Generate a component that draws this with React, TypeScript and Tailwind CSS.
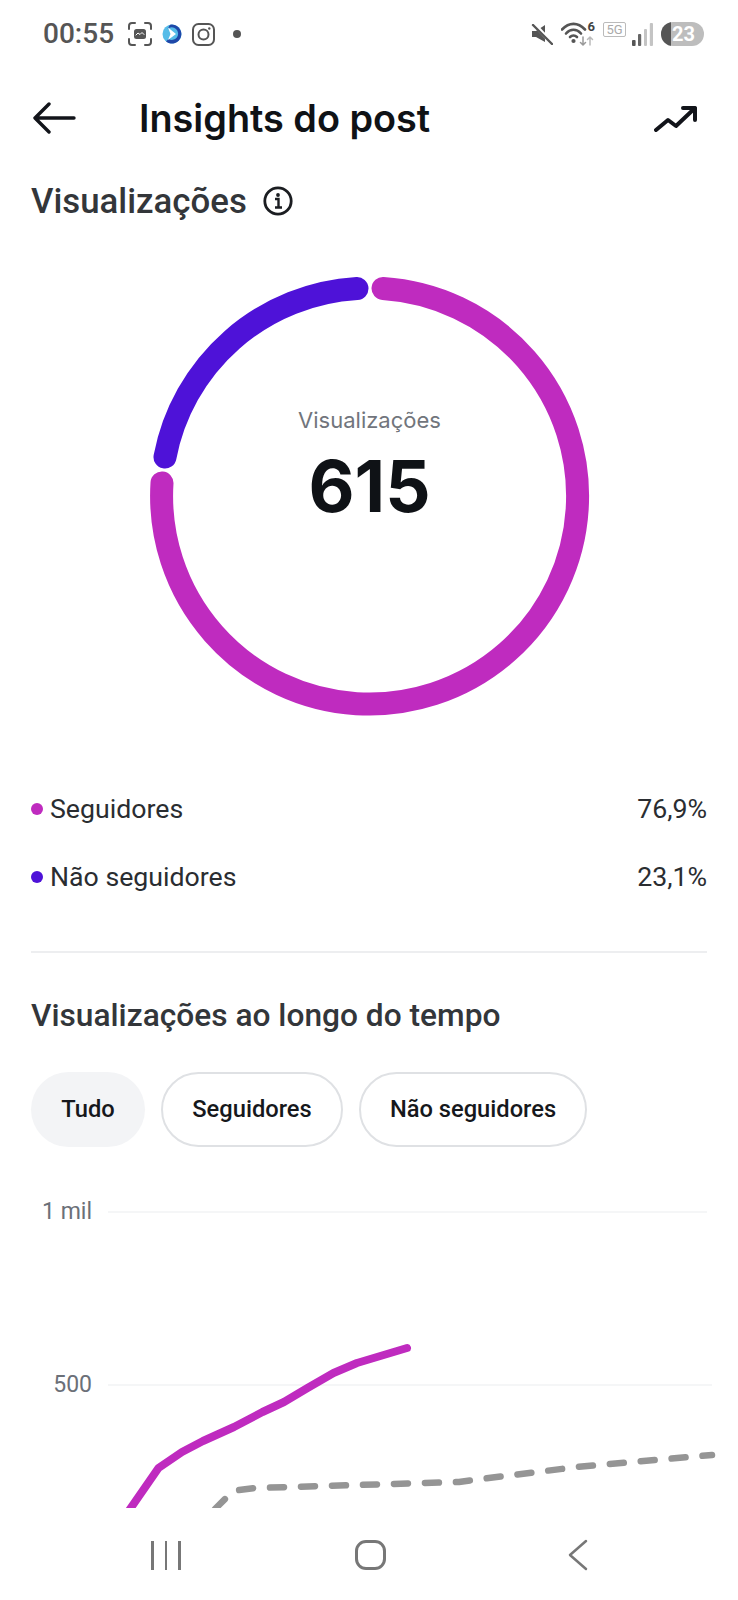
import React from 'react';

const MAGENTA = '#BF2BBF';
const INDIGO = '#4E12D8';

function Donut() {
    return (
        <svg width="440" height="440" viewBox="150 276 440 440" className="block">
            <path d="M383 288.5 A208 208 0 1 1 162 483" fill="none" stroke={MAGENTA} strokeWidth="23" strokeLinecap="round" />
            <path d="M165 457 A208 208 0 0 1 357 288.5" fill="none" stroke={INDIGO} strokeWidth="23" strokeLinecap="round" />
        </svg>
    );
}

function StatusBar() {
    return (
        <div className="h-[68px] flex items-center pl-[43px] pr-[34px] text-[#555]">
            <span className="font-['Roboto'] font-medium text-[28px] leading-none w-[85px]">00:55</span>
            <svg width="24" height="24" viewBox="0 0 24 24" fill="none" stroke="#555" strokeWidth="2" strokeLinecap="round">
                <path d="M1 7V4a3 3 0 0 1 3-3h3M17 1h3a3 3 0 0 1 3 3v3M23 17v3a3 3 0 0 1-3 3h-3M7 23H4a3 3 0 0 1-3-3v-3" />
                <rect x="6" y="7" width="12" height="10" rx="2.5" fill="#555" stroke="none" />
                <path d="M8 13l2-2 2 1.5 2-2 2 2" stroke="#fff" strokeWidth="1" />
            </svg>
            <svg width="20" height="20" viewBox="0 0 20 20" className="ml-[10px]">
                <circle cx="10" cy="10" r="9.5" fill="#56BCE8" />
                <path d="M8 .7A9.5 9.5 0 1 1 4 17.5l2.5-2.5a6.3 6.3 0 1 0-1-10Z" fill="#1F47A8" />
                <path d="M6 3.5l8 6.5-8 6 2.5-6Z" fill="#fff" />
            </svg>
            <svg width="23" height="23" viewBox="0 0 23 23" fill="none" stroke="#555" strokeWidth="2" className="ml-[10px]">
                <rect x="1" y="1" width="21" height="21" rx="5.5" />
                <circle cx="11.5" cy="11.5" r="5" />
                <circle cx="17.3" cy="5.5" r="1.2" fill="#555" stroke="none" />
            </svg>
            <div className="w-2 h-2 rounded-full bg-[#555] ml-[18px]" />
            <div className="flex-1" />
            <svg width="22" height="21" viewBox="0 0 22 21" className="mr-[8px]">
                <path d="M1 7h4l9-6v17l-9-5H1Z" fill="#555" />
                <path d="M3 0l18 19" stroke="#fff" strokeWidth="4" />
                <path d="M2 1l19 19" stroke="#555" strokeWidth="2.4" strokeLinecap="round" />
            </svg>
            <div className="relative w-[34px] h-[24px] mr-[8px]">
                <svg width="34" height="24" viewBox="0 0 34 24" fill="none" strokeLinecap="round" className="absolute left-0 top-0">
                    <path d="M1 7.5C8 0 17 0 24 7.5" stroke="#555" strokeWidth="2.6" />
                    <path d="M5 11.5C9.5 6.5 15.5 6.5 20 11.5" stroke="#555" strokeWidth="2.6" />
                    <path d="M9 15C11 13 14 13 16 15" stroke="#555" strokeWidth="2.6" />
                    <circle cx="12.5" cy="19" r="2.1" fill="#555" />
                    <path d="M22 15v8m-2.5-2.5L22 23l2.5-2.5" stroke="#999" strokeWidth="1.5" />
                    <path d="M29 23v-8m-2.5 2.5L29 15l2.5 2.5" stroke="#bbb" strokeWidth="1.5" />
                </svg>
                <span className="absolute right-0 -top-[2px] font-['Roboto'] font-bold text-[13px] leading-[14px] text-[#444]">6</span>
            </div>
            <div className="w-[23px] h-[15px] mb-[10px] mr-[6px] border border-[#bbb] rounded-[2px] flex items-center justify-center font-['Roboto'] text-[13px] leading-none text-[#aaa]">
                5G
            </div>
            <svg width="21" height="23" viewBox="0 0 21 23" className="mr-[8px]">
                <rect x="0" y="17" width="3.6" height="6" rx="1" fill="#555" />
                <rect x="6" y="11" width="3.2" height="12" rx="1" fill="#666" />
                <rect x="12" y="6" width="3" height="17" rx="1" fill="#c4c4c4" />
                <rect x="17.8" y="0" width="3.2" height="23" rx="1" fill="#c4c4c4" />
            </svg>
            <div className="relative w-[43px] h-[24px] rounded-full bg-[#bdbdbd] overflow-hidden flex items-center justify-end pr-[9px]">
                <div className="absolute left-0 top-0 bottom-0 w-[10px] bg-[#555]" />
                <span className="font-['Roboto'] font-bold text-[20px] leading-none text-white">23</span>
            </div>
        </div>
    );
}

function Chart() {
    return (
        <svg width="738" height="328" viewBox="0 1180 738 328" className="block">
            <line x1="108" y1="1212" x2="707" y2="1212" stroke="#F2F3F5" strokeWidth="1.5" />
            <line x1="108" y1="1385" x2="712" y2="1385" stroke="#F2F3F5" strokeWidth="1.5" />
            <text x="92" y="1219" textAnchor="end" fill="#6B7078" fontSize="23" className="font-['Roboto']">1 mil</text>
            <text x="92" y="1392" textAnchor="end" fill="#6B7078" fontSize="23" className="font-['Roboto']">500</text>
            <polyline
                points="215,1509 227,1497 239,1490 255,1488 459,1482 473,1480 577,1467 712,1455"
                fill="none"
                stroke="#959595"
                strokeWidth="6.5"
                strokeLinecap="round"
                strokeLinejoin="round"
                strokeDasharray="14 17"
            />
            <polyline
                points="128,1512 158.5,1468 182,1452 203,1441 234,1427 262.5,1412 284,1402 307.5,1388 333.5,1373 357,1363 407,1348"
                fill="none"
                stroke={MAGENTA}
                strokeWidth="8"
                strokeLinecap="round"
                strokeLinejoin="round"
            />
        </svg>
    );
}

function NavBar() {
    return (
        <div className="flex-1 relative bg-white">
            <div className="flex items-center h-[62px] pt-[16px] box-content">
                <div className="w-[151px]" />
                <div className="flex gap-[11px] w-[204px]">
                    <div className="w-[2.5px] h-[29px] bg-[#777]" />
                    <div className="w-[2.5px] h-[29px] bg-[#777]" />
                    <div className="w-[2.5px] h-[29px] bg-[#777]" />
                </div>
                <div className="w-[31px] h-[30px] rounded-[11px] border-[3px] border-[#777]" />
                <div className="w-[182px]" />
                <svg width="20" height="32" viewBox="0 0 20 32" fill="none" stroke="#777" strokeWidth="2.5" strokeLinecap="round" strokeLinejoin="round">
                    <path d="M18 2L2 16l16 14" />
                </svg>
            </div>
        </div>
    );
}

export default function App() {
    return (
        <div className="w-[738px] h-[1600px] bg-white overflow-hidden flex flex-col font-['Roboto',sans-serif]">
            <StatusBar />

            {/* Header */}
            <div className="h-[100px] flex items-center pl-[33px] pr-[41px]">
                <svg width="43" height="32" viewBox="0 0 43 32" fill="none" stroke="#12141A" strokeWidth="3.4" strokeLinecap="round" strokeLinejoin="round">
                    <path d="M41 16H3M16 2L2 16l14 14" />
                </svg>
                <h1 className="ml-[63px] pt-[2px] font-['Inter'] font-semibold text-[37.8px] leading-none text-[#0F1216]">
                    Insights do post
                </h1>
                <div className="flex-1" />
                <svg width="43" height="27" viewBox="0 0 43 27" fill="none" stroke="#12141A" strokeWidth="4" strokeLinecap="round" strokeLinejoin="round">
                    <path d="M2 25l12-10 8 6L41 3M29 3h12v12" />
                </svg>
            </div>

            {/* Donut */}
            <div className="pl-[31px] h-[68px] flex items-center gap-[16px] -mt-[1px]">
                <h2 className="font-['Roboto'] font-medium text-[34.8px] leading-none text-[#33363A]">Visualizações</h2>
                <svg width="30" height="30" viewBox="0 0 30 30" fill="none">
                    <circle cx="15" cy="15" r="13.2" stroke="#1B1D21" strokeWidth="2.8" />
                    <circle cx="15" cy="9" r="1.9" fill="#1B1D21" />
                    <path d="M12 13h3.5v8M12 21.5h7" stroke="#1B1D21" strokeWidth="2.4" />
                </svg>
            </div>

            <div className="relative self-center ml-[1px] mt-[41px]">
                <Donut />
                <div className="absolute inset-0 flex flex-col items-center pt-[128px]">
                    <span className="font-['Inter'] text-[22px] leading-[32px] text-[#71757C]">Visualizações</span>
                    <span className="font-['Inter'] font-bold text-[71px] leading-[80px] text-[#0F1216] mt-[10px]">615</span>
                </div>
            </div>

            {/* Legend */}
            <div className="mt-[75px] px-[31px] flex flex-col gap-[32px] font-['Roboto'] text-[26.7px] leading-[36px] text-[#2A2D31]">
                <div className="flex items-center">
                    <div className="w-3 h-3 rounded-full bg-[#BF2BBF] mr-[7px]" />
                    <span className="flex-1">Seguidores</span>
                    <span>76,9%</span>
                </div>
                <div className="flex items-center">
                    <div className="w-3 h-3 rounded-full bg-[#4E12D8] mr-[7px]" />
                    <span className="flex-1">Não seguidores</span>
                    <span>23,1%</span>
                </div>
            </div>

            <div className="mx-[31px] mt-[56px] h-[2px] bg-[#EDEEF0]" />

            <h3 className="ml-[31px] mt-[43px] font-['Roboto'] font-medium text-[31.7px] leading-[40px] text-[#33363A]">
                Visualizações ao longo do tempo
            </h3>

            {/* Filters */}
            <div className="flex gap-[16px] ml-[31px] mt-[36px] font-['Roboto'] font-medium text-[23.7px] text-[#16181C]">
                <div className="w-[114px] h-[75px] rounded-full bg-[#F3F4F6] flex items-center justify-center">Tudo</div>
                <div className="w-[182px] h-[75px] rounded-full border-2 border-[#DFE1E4] flex items-center justify-center">Seguidores</div>
                <div className="w-[228px] h-[75px] rounded-full border-2 border-[#DFE1E4] flex items-center justify-center">Não seguidores</div>
            </div>

            <div className="mt-[33px]">
                <Chart />
            </div>
            <NavBar />
        </div>
    );
}
